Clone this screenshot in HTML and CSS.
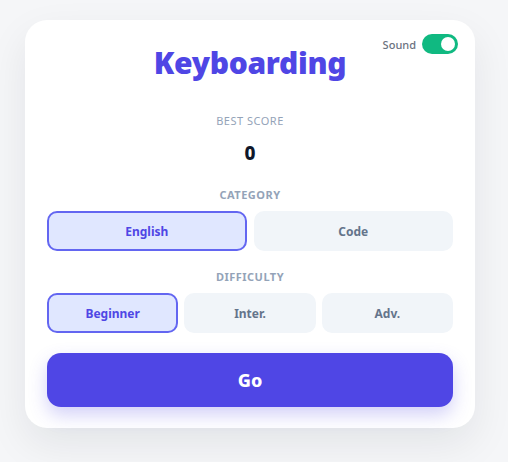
FILE: index.html
```html
<!DOCTYPE html>
<html>
<head>
<meta charset="utf-8">
<link rel="stylesheet" href="styles.css">
</head>
<body>
<div class="card">
  <div class="sound">
    <span class="sound-label">Sound</span>
    <span class="toggle"><span class="knob"></span></span>
  </div>
  <h1 class="title">Keyboarding</h1>
  <div class="label score-label">BEST SCORE</div>
  <div class="score">0</div>
  <div class="label section-label">CATEGORY</div>
  <div class="options two">
    <button class="opt active">English</button>
    <button class="opt">Code</button>
  </div>
  <div class="label section-label diff">DIFFICULTY</div>
  <div class="options three">
    <button class="opt active">Beginner</button>
    <button class="opt">Inter.</button>
    <button class="opt">Adv.</button>
  </div>
  <button class="go">Go</button>
</div>
</body>
</html>
```
FILE: styles.css
```css
* { box-sizing: border-box; }
html, body { margin: 0; height: 100%; }
body {
  background: #f5f6f8;
  font-family: "Noto Sans", "Open Sans", sans-serif;
  padding: 20px 0 0 25px;
}
.card {
  position: relative;
  width: 450px;
  background: #fff;
  border-radius: 22px;
  box-shadow: 0 16px 40px rgba(15, 23, 42, 0.08);
  padding: 20px 22px 21px;
  display: flex;
  flex-direction: column;
}
.sound {
  position: absolute;
  top: 14px;
  right: 17px;
  display: flex;
  align-items: center;
  gap: 6px;
}
.sound-label {
  font-size: 11px;
  color: #6b7280;
  font-weight: 500;
}
.toggle {
  width: 36px;
  height: 20px;
  border-radius: 10px;
  background: #10b981;
  position: relative;
  display: block;
}
.knob {
  position: absolute;
  right: 3px;
  top: 3px;
  width: 14px;
  height: 14px;
  border-radius: 50%;
  background: #fff;
}
.title {
  margin: 0;
  text-align: center;
  font-size: 30px;
  font-weight: 900;
  color: #4f46e5;
  line-height: 46px;
  letter-spacing: -0.3px;
}
.label {
  text-align: center;
  font-size: 11px;
  color: #94a3b8;
  letter-spacing: 0.5px;
  line-height: 16px;
}
.score-label { margin-top: 27px; }
.score {
  text-align: center;
  font-size: 19px;
  font-weight: 800;
  color: #0f172a;
  line-height: 26px;
  margin-top: 11px;
}
.section-label {
  font-weight: 700;
  margin-top: 21px;
}
.section-label.diff { margin-top: 18px; }
.options {
  display: grid;
  gap: 7px;
  margin-top: 8px;
}
.options.two { grid-template-columns: 1fr 1fr; }
.options.three { grid-template-columns: 1fr 1fr 1fr; gap: 6px; }
.opt {
  height: 40px;
  border: 2px solid transparent;
  border-radius: 10px;
  background: #f1f5f9;
  color: #64748b;
  font-family: inherit;
  font-size: 12px;
  font-weight: 700;
  padding: 0;
}
.opt.active {
  background: #e0e7ff;
  border-color: #6366f1;
  color: #4f46e5;
}
.go {
  margin-top: 20px;
  height: 54px;
  border: none;
  border-radius: 14px;
  background: #4f46e5;
  color: #fff;
  font-family: inherit;
  font-size: 18px;
  font-weight: 800;
  box-shadow: 0 8px 18px rgba(79, 70, 229, 0.25);
}
```
